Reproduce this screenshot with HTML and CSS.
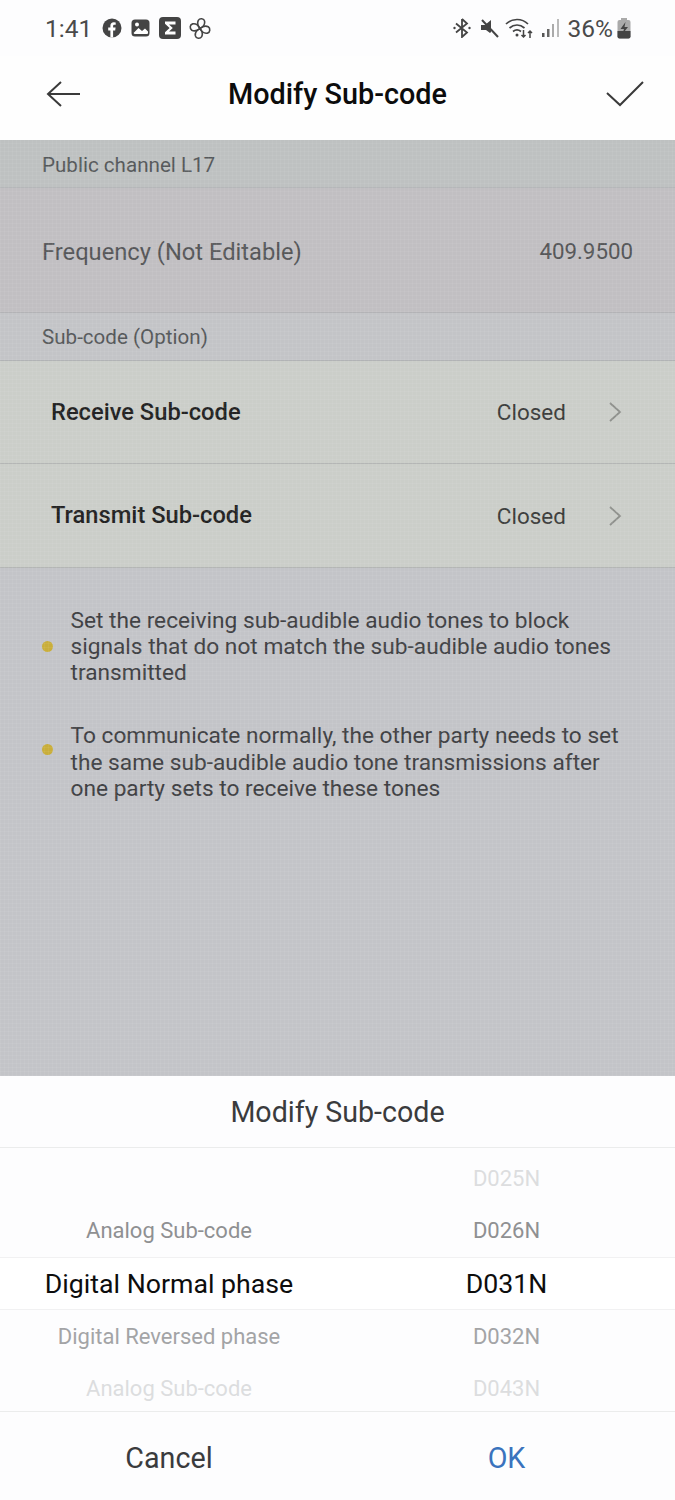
FILE: index.html
```html
<!DOCTYPE html>
<html lang="en">
<head>
<meta charset="utf-8">
<title>Modify Sub-code</title>
<link rel="stylesheet" href="styles.css">
</head>
<body>
<div class="page">
  <div class="status">
    <span class="time">1:41</span>
    <span class="status-icons">
      <svg class="ic" width="20" height="20" viewBox="0 0 20 20"><circle cx="10" cy="10" r="9.500" fill="#444"/><path d="M8.400 19.500v-7H6.200V9.600h2.200V7.700c0-2.300 1.300-3.500 3.400-3.500l1.900.2v2.400h-1.200c-1.100 0-1.400.6-1.400 1.400v1.400h2.500l-.4 2.900h-2.100v7z" fill="#fff"/></svg>
      <svg class="ic" width="19" height="18" viewBox="0 0 19 18"><rect x=".5" y=".5" width="18" height="17" rx="3.500" fill="#444"/><path d="M2.500 14l5-5 3.500 3 3-2.500 3 3v1.500a1 1 0 0 1-1 1h-12.500z" fill="#fff"/><circle cx="6" cy="5.500" r="2" fill="#fff"/></svg>
      <svg class="ic" width="22" height="22" viewBox="0 0 22 22"><rect width="22" height="22" rx="4" fill="#444"/><path d="M6 4.500h10.500v3H10l3.800 3.500L10 14.500h6.500v3H6v-2.300l4.600-4.200L6 6.800z" fill="#fff"/></svg>
      <svg class="ic pin" width="22" height="23" viewBox="0 0 22 22" fill="none" stroke="#444" stroke-width="1.600">
        <path d="M11 11C9 8.500 8.200 5 9.300 2.800 10.800.4 15 .8 15.600 3.600c.5 2.800-1.600 5.900-4.600 7.400z"/>
        <path transform="rotate(90 11 11)" d="M11 11C9 8.500 8.200 5 9.300 2.800 10.800.4 15 .8 15.600 3.600c.5 2.800-1.600 5.900-4.600 7.400z"/>
        <path transform="rotate(180 11 11)" d="M11 11C9 8.500 8.200 5 9.300 2.800 10.800.4 15 .8 15.600 3.600c.5 2.800-1.600 5.900-4.600 7.400z"/>
        <path transform="rotate(270 11 11)" d="M11 11C9 8.500 8.200 5 9.300 2.800 10.800.4 15 .8 15.600 3.600c.5 2.800-1.600 5.900-4.600 7.400z"/>
      </svg>
    </span>
    <span class="status-right">
      <svg class="ic" width="18" height="20" viewBox="0 0 18 20" fill="none" stroke="#444" stroke-width="1.800"><path d="M9 1v18l5-4.500L3 5.500M9 1l5 4.500L3 14.500"/><circle cx="1.500" cy="10" r="1.200" fill="#444" stroke="none"/><circle cx="16.500" cy="10" r="1.200" fill="#444" stroke="none"/></svg>
      <svg class="ic" width="19" height="20" viewBox="0 0 19 20"><path d="M1 7h4l6-5v12l-1 1-4-3H1z" fill="#444"/><path d="M2 2l16 17" stroke="#444" stroke-width="2"/></svg>
      <svg class="ic wifi" width="29" height="22" viewBox="0 0 29 22" fill="none" stroke="#444" stroke-width="1.700"><path d="M1 7C7 1 17 1 23 7M4.500 11c4.500-4 10.500-4 15 0M8 14.500c2.500-2 5.500-2 8 0"/><circle cx="12" cy="18" r="1.500" fill="#444" stroke="none"/><path d="M18.500 13v7M16.500 18l2 2 2-2M25 21v-7M23 16l2-2 2 2" stroke-width="1.500"/></svg>
      <svg class="ic" width="18" height="20" viewBox="0 0 18 20"><rect x="0" y="15" width="2.500" height="4" fill="#555"/><rect x="5" y="11" width="2.500" height="8" fill="#666"/><rect x="10" y="6" width="2" height="13" fill="#aaa"/><rect x="15" y="1" width="2" height="18" fill="#bbb"/></svg>
      <span class="pct">36%</span>
      <svg class="ic" width="14" height="21" viewBox="0 0 14 21"><rect x="4" y="0" width="6" height="3" fill="#aaa"/><rect x="0.500" y="2" width="13" height="18.500" rx="2" fill="#aaa"/><path d="M0.500 13h13v5.500a2 2 0 0 1-2 2h-9a2 2 0 0 1-2-2z" fill="#444"/><path d="M8.500 4L3.500 11H7l-1.500 5L11 9H7.500z" fill="#444"/></svg>
    </span>
  </div>

  <header class="nav">
    <svg class="nav-icon nav-back" width="36" height="28" viewBox="0 0 36 28" fill="none" stroke="#3a3a3a" stroke-width="2"><path d="M34 14H2M15 2L2 14l13 12"/></svg>
    <h1 class="nav-title">Modify Sub-code</h1>
    <svg class="nav-icon nav-done" width="38" height="26" viewBox="0 0 38 26" fill="none" stroke="#3a3a3a" stroke-width="2"><path d="M1 12l13 12L37 1"/></svg>
  </header>

  <main class="content">
    <div class="label label-public">Public channel L17</div>
    <div class="freq">
      <span class="freq-name">Frequency (Not Editable)</span>
      <span class="freq-value">409.9500</span>
    </div>
    <div class="label label-sub">Sub-code (Option)</div>
    <div class="row">
      <span class="row-name">Receive Sub-code</span>
      <span class="row-value">Closed</span>
      <svg class="chev" width="14" height="22" viewBox="0 0 14 22" fill="none" stroke="#8e908c" stroke-width="1.800"><path d="M2 2l10 9-10 9"/></svg>
    </div>
    <div class="row row-tx">
      <span class="row-name">Transmit Sub-code</span>
      <span class="row-value">Closed</span>
      <svg class="chev" width="14" height="22" viewBox="0 0 14 22" fill="none" stroke="#8e908c" stroke-width="1.800"><path d="M2 2l10 9-10 9"/></svg>
    </div>
    <div class="notes">
      <div class="note">
        <span class="dot"></span>
        <p class="note-text">Set the receiving sub-audible audio tones to block signals that do not match the sub-audible audio tones transmitted</p>
      </div>
      <div class="note">
        <span class="dot dot-high"></span>
        <p class="note-text">To communicate normally, the other party needs to set the same sub-audible audio tone transmissions after one party sets to receive these tones</p>
      </div>
    </div>
  </main>

  <section class="sheet">
    <div class="sheet-title">Modify Sub-code</div>
    <div class="picker">
      <div class="col">
        <div class="item"></div>
        <div class="item near">Analog Sub-code</div>
        <div class="item sel">Digital Normal phase</div>
        <div class="item near2">Digital Reversed phase</div>
        <div class="item far">Analog Sub-code</div>
      </div>
      <div class="col">
        <div class="item far">D025N</div>
        <div class="item near">D026N</div>
        <div class="item sel">D031N</div>
        <div class="item near2">D032N</div>
        <div class="item far">D043N</div>
      </div>
      <div class="band"></div>
    </div>
    <div class="actions">
      <span class="btn">Cancel</span>
      <span class="btn ok">OK</span>
    </div>
  </section>
</div>
</body>
</html>
```
FILE: styles.css
```css
* { box-sizing: border-box; margin: 0; padding: 0; }
html, body { width: 675px; height: 1500px; overflow: hidden; }
body { font-family: Roboto, "Liberation Sans", sans-serif; background: #fdfdfe; color: #333; }
.page { width: 675px; height: 1500px; display: flex; flex-direction: column; }

.status { height: 56px; display: flex; align-items: center; padding: 0 44px 0 45px; flex: none; color: #4a4a4a; }
.time { font-size: 24.500px; }
.status-icons { display: flex; align-items: center; gap: 9px; margin-left: 10px; }
.pin { margin-left: -1px; }
.status-right { margin-left: auto; display: flex; align-items: center; gap: 9px; }
.ic { display: block; flex: none; }
.wifi { margin: 0 -1px 0 -3px; }
.pct { font-size: 24.500px; margin: 0 -5px 0 -1px; }

.nav { height: 84px; flex: none; display: grid; grid-template-columns: 1fr auto 1fr; align-items: center; padding: 0 31px 8px; background: #fefefe; }
.nav-back { margin-left: 15px; }
.nav-title { font-size: 28.800px; font-weight: 500; color: #0c0c0c; }
.nav-done { justify-self: end; }

.content { flex: 1; min-height: 0; display: flex; flex-direction: column; background: #c3c4c8; position: relative; }
.content::after { content: ""; position: absolute; inset: 0; pointer-events: none; background-image: repeating-linear-gradient(90deg, rgba(255,255,255,.05) 0 1px, transparent 1px 4px), repeating-linear-gradient(0deg, rgba(255,255,255,.05) 0 1px, transparent 1px 4px); }
.label { height: 48px; display: flex; align-items: center; padding: 2px 0 0 42px; font-size: 20.600px; color: #55585a; border-bottom: 1px solid #b1b3b5; }
.label-public { background: #bec1c1; }
.label-sub { background: #c3c4c7; padding-top: 0; }
.freq { height: 125px; display: flex; align-items: center; justify-content: space-between; padding: 3px 42px 0; background: #c1bfc2; border-bottom: 1px solid #b3b3b6; color: #555658; font-size: 23.700px; }
.freq-value { font-size: 22.300px; margin-top: -1px; }
.row { height: 103px; display: flex; align-items: center; padding: 0 53px 0 51px; background: #cbcec9; border-bottom: 1px solid #b0b2b1; }
.row-tx { height: 104px; }
.row-name { font-size: 23.700px; font-weight: 500; color: #222; margin-top: -1px; }
.row-value { margin-left: auto; font-size: 22.500px; color: #3c3d3c; }
.chev { margin-left: 42px; flex: none; }

.notes { padding: 39.500px 50px 0 42px; display: flex; flex-direction: column; gap: 37px; }
.note { display: flex; align-items: center; gap: 17.500px; }
.dot { width: 11px; height: 11px; border-radius: 50%; background: #c9ae3a; flex: none; }
.dot-high { margin-bottom: 27px; }
.note-text { font-size: 22.700px; line-height: 26.300px; color: #3f4043; }

.sheet { height: 424px; flex: none; background: #fdfdfe; display: flex; flex-direction: column; }
.sheet-title { height: 72px; display: flex; align-items: center; justify-content: center; font-size: 28.600px; color: #3a3b3d; border-bottom: 1px solid #ebecec; flex: none; }
.picker { height: 264px; flex: none; display: grid; grid-template-columns: 338px 337px; position: relative; border-bottom: 1px solid #ebecec; padding-top: 4px; }
.col { display: flex; flex-direction: column; position: relative; z-index: 1; }
.item { height: 52.600px; display: flex; align-items: center; justify-content: center; font-size: 22px; flex: none; }
.near { color: #8f9092; }
.near2 { color: #a3a4a6; }
.far { color: #dcdddf; }
.sel { font-size: 26.700px; color: #0d0d0d; padding-top: 1px; }
.band { position: absolute; left: 0; right: 0; top: 109px; height: 53px; background: #fff; border-top: 1px solid #f1f1f2; border-bottom: 1px solid #f1f1f2; }
.actions { flex: 1; display: grid; grid-template-columns: 338px 337px; align-items: center; }
.btn { text-align: center; font-size: 28.700px; color: #3a3b3d; padding-top: 4px; }
.ok { color: #3a73bd; }
```
